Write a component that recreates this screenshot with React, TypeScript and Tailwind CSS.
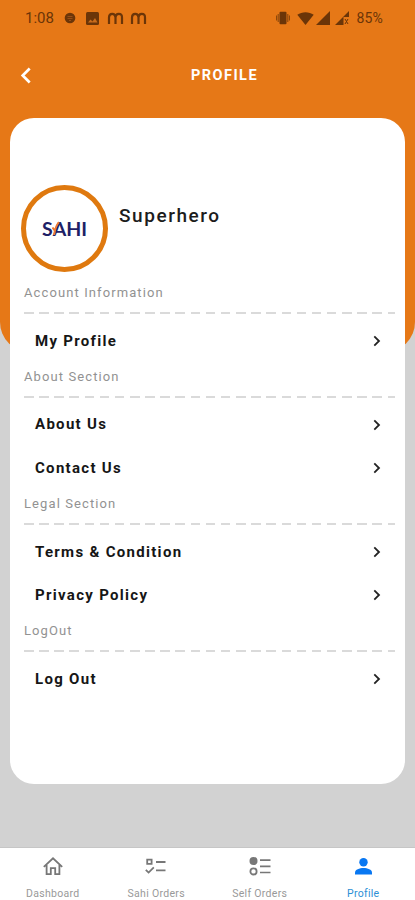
import { ReactNode } from "react";

const sections = [
  { title: "Account Information", items: ["My Profile"] },
  { title: "About Section", items: ["About Us", "Contact Us"] },
  { title: "Legal Section", items: ["Terms & Condition", "Privacy Policy"] },
  { title: "LogOut", items: ["Log Out"] },
];

function StatusBar() {
  return (
    <div className="flex h-9 items-center justify-between pl-[25px] pr-[32px] text-[#6b3508]">
      <div className="flex items-center">
        <span className="w-[39px] text-[15px] leading-none">1:08</span>
        <svg width="12" height="12" viewBox="0 0 12 12">
          <circle cx="6" cy="6" r="5.3" fill="currentColor" />
          <path d="M3.5 4.5h5M3.5 6.5h5M5 8.5h2" stroke="#a4561a" strokeWidth="0.8" />
        </svg>
        <svg width="13" height="13" viewBox="0 0 13 13" className="ml-[10px]">
          <rect width="13" height="13" rx="1.5" fill="currentColor" />
          <path d="M2 10.5l2.5-3 2 2 2.5-3.5 2.5 4.5z" fill="#c96c1c" />
        </svg>
        <MLogo className="ml-[8px]" />
        <MLogo className="ml-[6px]" />
      </div>
      <div className="flex items-center">
        <svg width="14" height="14" viewBox="0 0 14 14">
          <rect x="3.5" y="0.8" width="7" height="12.4" rx="1" fill="currentColor" />
          <path d="M0.6 4.5v5M2.2 3v8M11.8 3v8M13.4 4.5v5" stroke="currentColor" strokeWidth="0.8" />
        </svg>
        <svg width="17" height="13" viewBox="0 0 17 13" className="ml-[7px]">
          <path d="M0.3 2.8C5 -0.7 12 -0.7 16.7 2.8L8.5 13z" fill="currentColor" />
        </svg>
        <svg width="14" height="14" viewBox="0 0 14 14" className="ml-[2px]">
          <path d="M14 0v14H0z" fill="currentColor" />
        </svg>
        <svg width="14" height="14" viewBox="0 0 14 14" className="ml-[5px]">
          <path d="M14 0v6H8.5v8H0z" fill="currentColor" />
          <path d="M10 8l3 5M13 8l-3 5" stroke="currentColor" />
        </svg>
        <span className="ml-[7px] text-[14px] leading-none tracking-[0.2px]">85%</span>
      </div>
    </div>
  );
}

function MLogo({ className }: { className: string }) {
  return (
    <svg width="17" height="13" viewBox="0 0 17 13" fill="none" className={className}>
      <path
        d="M2 12V5.5Q2 1.9 5.2 1.9T8.5 5.5V12M8.5 5.5Q8.5 1.9 11.8 1.9T15 5.5V12"
        stroke="currentColor"
        strokeWidth="2.2"
      />
    </svg>
  );
}

function Header() {
  return (
    <header className="h-[352px] rounded-b-[30px] bg-[#e67817]">
      <StatusBar />
      <div className="grid h-[78px] grid-cols-[171px_1fr] items-center pl-[20px]">
        <svg width="12" height="17" viewBox="0 0 12 17" fill="none">
          <path d="M9.7 1.5L2.7 8.5l7 7" stroke="#fff" strokeWidth="2.7" />
        </svg>
        <h1 className="pt-[2px] text-[14.5px] font-bold tracking-[1.45px] text-white">PROFILE</h1>
      </div>
    </header>
  );
}

function Avatar() {
  return (
    <div className="flex h-[87px] w-[87px] items-center justify-center rounded-full border-[5.5px] border-[#df790f]">
      <div className="relative flex font-['Lato',sans-serif] text-[19.5px] font-bold leading-none text-[#1d2166]">
        <span>S</span>
        <span>A</span>
        <span>H</span>
        <span>I</span>
        <svg width="10" height="15" viewBox="0 0 10 15" fill="none" className="absolute left-[10px] top-[2px]">
          <path d="M0.5 6.5l2.3 3.2M2.2 14C2.8 9 4.5 4 7 1.2" stroke="#ec7a35" strokeWidth="2" />
        </svg>
      </div>
    </div>
  );
}

function Section({ title, items }: { title: string; items: string[] }) {
  return (
    <section>
      <h3 className="flex h-[28.2px] items-center text-[13px] tracking-[1.1px] text-[#929292]">{title}</h3>
      <div className="flex h-[12px] items-center">
        <div className="h-[2px] w-full bg-[repeating-linear-gradient(90deg,#dadada_0px,#dadada_9.5px,transparent_9.5px,transparent_15.15px)]" />
      </div>
      {items.map((item) => (
        <button
          key={item}
          className="flex h-[43.5px] w-full items-center justify-between pl-[11px] pr-[14px] text-[15px] font-bold tracking-[1.3px] text-[#161616]"
        >
          {item}
          <svg width="8" height="12" viewBox="0 0 8 12" fill="none">
            <path d="M1.3 1.3L6 6l-4.7 4.7" stroke="#222" strokeWidth="1.8" />
          </svg>
        </button>
      ))}
    </section>
  );
}

function Tab({ label, active, children }: { label: string; active?: boolean; children: ReactNode }) {
  return (
    <button className={active ? "flex flex-col items-center text-[#0877f2]" : "flex flex-col items-center text-[#777]"}>
      <svg width="22" height="20" viewBox="0 0 22 20" fill="none" className="mt-[8px]">
        {children}
      </svg>
      <span
        className={
          active
            ? "mt-[10px] text-[10.5px] leading-[16px] tracking-[0.3px] text-[#2d8fd5]"
            : "mt-[10px] text-[10.5px] leading-[16px] tracking-[0.3px] text-[#999]"
        }
      >
        {label}
      </span>
    </button>
  );
}

function BottomTabs() {
  return (
    <nav className="grid h-[53px] grid-cols-4 border-t border-[#c6c6c6] bg-white pl-[1px]">
      <Tab label="Dashboard">
        <path
          d="M1.8 10.8L11 2.3l9.2 8.5M4.6 9v9.2h4.2v-6h4.4v6h4.2V9"
          stroke="currentColor"
          strokeWidth="1.8"
        />
      </Tab>
      <Tab label="Sahi Orders">
        <path d="M2.2 3.7h4.4v4.2H2.2zM11 6h9.5M11 14.3h9.5M0.8 13.8l2.8 2.8 5.2-5.2" stroke="currentColor" strokeWidth="1.8" />
      </Tab>
      <Tab label="Self Orders">
        <circle cx="4.5" cy="5" r="4" fill="currentColor" />
        <circle cx="4.5" cy="15.4" r="3.1" stroke="currentColor" strokeWidth="1.8" />
        <path d="M11 4.2h10.5M11 10.3h10.5M11 16.5h10.5" stroke="currentColor" strokeWidth="1.7" />
      </Tab>
      <Tab label="Profile" active>
        <circle cx="11.5" cy="6.2" r="4.2" fill="currentColor" />
        <path d="M3 18.5v-2c0-2.8 4.5-4.5 8.5-4.5s8.5 1.7 8.5 4.5v2z" fill="currentColor" />
      </Tab>
    </nav>
  );
}

export default function App() {
  return (
    <div className="flex h-[900px] w-[415px] flex-col overflow-hidden bg-[#d2d2d2] font-['Roboto',sans-serif]">
      <Header />
      <main className="relative mx-[10px] -mt-[234px] h-[666px] rounded-[24px] bg-white pt-[67px]">
        <div className="flex pl-[11px]">
          <Avatar />
          <h2 className="ml-[11px] mt-[18px] text-[19px] font-medium leading-[26px] tracking-[1.55px] text-[#1c1c1c]">
            Superhero
          </h2>
        </div>
        <div className="mt-[7px] pl-[14px] pr-[10px]">
          {sections.map((section) => (
            <Section key={section.title} title={section.title} items={section.items} />
          ))}
        </div>
      </main>
      <div className="flex-1" />
      <BottomTabs />
    </div>
  );
}
